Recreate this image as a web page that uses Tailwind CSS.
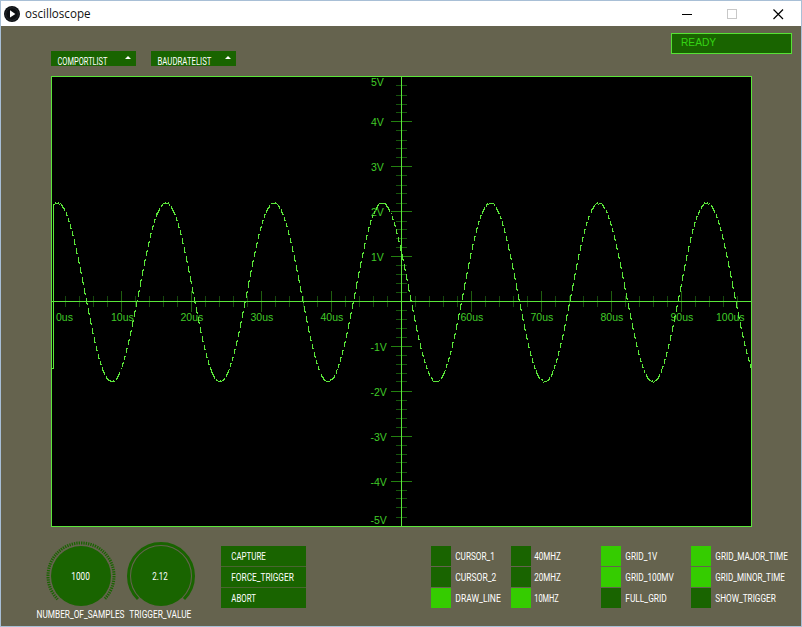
<!DOCTYPE html>
<html lang="en">
<head>
<meta charset="utf-8">
<title>oscilloscope</title>
<script src="https://cdn.jsdelivr.net/npm/@tailwindcss/browser@4"></script>
</head>
<body class="w-[802px] h-[627px] overflow-hidden">
<div class="w-[802px] h-[627px] flex flex-col border border-[#a8bfd6] bg-[#65634e]">
  <header class="h-[25px] shrink-0 bg-white flex items-center">
    <svg class="ml-[3px] shrink-0" width="16" height="16" viewBox="0 0 16 16"><circle cx="8" cy="8" r="8" fill="#0c0f12"/><circle cx="8" cy="8" r="6.3" fill="none" stroke="#30343a" stroke-width=".7"/><path d="M6 4.2 11.4 8 6 11.6Z" fill="#fff"/></svg>
    <svg class="ml-[5px]" width="70" height="24"><text x="0" y="16" textLength="65.5" lengthAdjust="spacingAndGlyphs" class="font-['Open_Sans',sans-serif] text-[12px]" fill="#111">oscilloscope</text></svg>
    <svg class="ml-auto mr-[14px]" width="106" height="24" fill="none" shape-rendering="crispEdges"><path d="M1 12.500h10" stroke="#000"/><rect x="46.500" y="7.500" width="9" height="9" stroke="#c8c8c8"/><path d="M92.500 7.500 102 17M102 7.500 92.500 17" stroke="#000" stroke-width="1.200" shape-rendering="auto"/></svg>
  </header>

  <div class="h-[50px] shrink-0 flex items-start pl-[50px] pr-[9px]">
    <div class="mt-[25px] mr-[15px] w-[85px] h-[15px] bg-[#196400]"><svg width="85" height="15" fill="#fff" class="font-[Roboto,sans-serif] text-[10px] overflow-visible"><text x="6.500" y="14" textLength="50" lengthAdjust="spacingAndGlyphs">COMPORTLIST</text><path d="M74 8 77 5 80 8Z"/></svg></div>
    <div class="mt-[25px] w-[85px] h-[15px] bg-[#196400]"><svg width="85" height="15" fill="#fff" class="font-[Roboto,sans-serif] text-[10px] overflow-visible"><text x="6.500" y="14" textLength="54" lengthAdjust="spacingAndGlyphs">BAUDRATELIST</text><path d="M74 8 77 5 80 8Z"/></svg></div>
    <div class="ml-auto mt-[7px] w-[121px] h-[21px] border border-[#57e234] bg-[#196400] pl-[9px] pt-[2px] font-['Liberation_Sans',sans-serif] text-[10.2px] leading-[14px] text-[#35d414]">READY</div>
  </div>

  <svg class="ml-[50px] shrink-0" width="701" height="451" viewBox="51 76 701 451">
    <rect x="51" y="76" width="701" height="451" fill="#000"/>
    <g id="ticks" shape-rendering="crispEdges"></g>
    <g id="labels" class="font-['Liberation_Sans',sans-serif] text-[10.5px]" fill="#40cc28"></g>
    <g id="wave" fill="#5be63a" shape-rendering="crispEdges"></g>
    <g fill="#5be63a" shape-rendering="crispEdges">
      <rect x="51" y="301" width="701" height="1"/>
      <rect x="401" y="76" width="1" height="451"/>
      <rect x="53" y="204" width="1" height="165"/>
      <rect x="52" y="368" width="2" height="1"/>
      <rect x="51" y="76" width="701" height="1"/>
      <rect x="51" y="526" width="701" height="1"/>
      <rect x="51" y="76" width="1" height="451"/>
      <rect x="751" y="76" width="1" height="451"/>
    </g>
  </svg>

  <div class="flex items-start pl-[35px] pt-[14px] font-[Roboto,sans-serif] text-[10px]">
    <svg class="overflow-visible" width="90" height="82" viewBox="36 541 90 82" fill="#fff">
      <circle cx="81" cy="576" r="30" fill="#196400"/>
      <path d="M57.700 599.300A33 33 0 1 1 104.300 599.300" fill="none" stroke="#196400" stroke-width="3" stroke-dasharray="1.300 1.050"/>
      <text x="71.300" y="580" textLength="18.500" lengthAdjust="spacingAndGlyphs">1000</text>
      <text x="36.500" y="618" textLength="88" lengthAdjust="spacingAndGlyphs">NUMBER_OF_SAMPLES</text>
    </svg>
    <svg class="overflow-visible" width="70" height="82" viewBox="126 541 70 82" fill="#fff">
      <circle cx="161" cy="576" r="30" fill="#196400"/>
      <path d="M138 599A32.500 32.500 0 1 1 184 599" fill="none" stroke="#196400" stroke-width="3"/>
      <text x="152.300" y="580" textLength="15.500" lengthAdjust="spacingAndGlyphs">2.12</text>
      <text x="129.300" y="618" textLength="62" lengthAdjust="spacingAndGlyphs">TRIGGER_VALUE</text>
    </svg>
    <div class="ml-[25px] mt-[5px] w-[85px] flex flex-col gap-px bg-[#4a6530]">
      <div class="h-[20px] bg-[#196400]"><svg width="85" height="20" fill="#fff"><text x="10.300" y="14" textLength="34.500" lengthAdjust="spacingAndGlyphs">CAPTURE</text></svg></div>
      <div class="h-[20px] bg-[#196400]"><svg width="85" height="20" fill="#fff"><text x="10.300" y="14" textLength="62.500" lengthAdjust="spacingAndGlyphs">FORCE_TRIGGER</text></svg></div>
      <div class="h-[20px] bg-[#196400]"><svg width="85" height="20" fill="#fff"><text x="10.300" y="14" textLength="24.500" lengthAdjust="spacingAndGlyphs">ABORT</text></svg></div>
    </div>
    <div id="toggles" class="ml-[125px] mt-[5px] flex"></div>
  </div>
</div>
<script>
// Scale marks along both axes
const vMinor = [85,95,104,112,130,140,148,157,175,185,193,203,221,229,238,247,265,274,283,292,310,319,328,337,355,364,373,381,400,409,418,427,445,454,462,472,490,498,507,517];
let t = '';
vMinor.forEach(y => t += `<rect x="396" y="${y}" width="11" height="1" fill="#16560c"/>`);
[121,166,211,256,346,391,436,481].forEach(y => t += `<rect x="391" y="${y}" width="21" height="1" fill="#23800f"/>`);
for (let i = 1; i < 50; i++) {
  const major = i % 5 === 0;
  t += `<rect x="${51 + i * 14}" y="${major ? 291 : 296}" width="1" height="${major ? 21 : 11}" fill="${major ? '#20600f' : '#16480d'}"/>`;
}
document.getElementById('ticks').innerHTML = t;

const labels = [['5V',371,86],['4V',371,126],['3V',371,171],['2V',371,216],['1V',371,261],['-1V',370.5,351],['-2V',370.5,396],['-3V',370.5,441],['-4V',370.5,486],['-5V',370.5,524],
['0us',56,321],['10us',111,321],['20us',180.5,321],['30us',250.5,321],['40us',320.5,321],['60us',460.5,321],['70us',530.5,321],['80us',600.5,321],['90us',670.5,321],['100us',716,321]];
document.getElementById('labels').innerHTML = labels.map(l => `<text x="${l[1]}" y="${l[2]}">${l[0]}</text>`).join('');

// Sampled sine trace: uneven steps near the crests, short vertical runs with breaks elsewhere
const f = x => 292 - 89.5 * Math.cos(2 * Math.PI * (x - 57.8) / 108.2);
let w = '';
for (let x = 54; x < 751; x++) {
  const ya = f(x), yb = f(x + 1), up = yb < ya;
  const a = Math.round(ya), b = Math.round(yb), slope = Math.abs(yb - ya);
  let top = Math.min(a, b), h = Math.max(1, Math.abs(b - a));
  if (slope < 1) {
    const n = (x * 37) % 11;
    if (n < 2) { top -= 1; h = 2; } else if (n === 5) top += 1;
  } else if (slope < 2.5) {
    if (x % 5 === 0) continue;
    h += 1;
  } else if (x % 2) {
    const g = slope > 3.6 ? 3 : 2;
    h = Math.max(1, h - g);
    if (up) top = Math.max(a, b) - h;
  } else {
    h += 1;
    if (up) top -= 1;
  }
  w += `<rect x="${x}" y="${top}" width="1" height="${h}"/>`;
}
document.getElementById('wave').innerHTML = w;

// Toggle columns: column width, label offset, then [label, text width, on]
const cols = [
  [80, 4.3, [['CURSOR_1',39.5,0],['CURSOR_2',41,0],['DRAW_LINE',45.5,1]]],
  [90, 3.3, [['40MHZ',26.5,0],['20MHZ',26.5,0],['10MHZ',24.5,1]]],
  [90, 4.3, [['GRID_1V',32,1],['GRID_100MV',48.5,1],['FULL_GRID',41.5,0]]],
  [100, 4.3, [['GRID_MAJOR_TIME',72.5,1],['GRID_MINOR_TIME',69.5,1],['SHOW_TRIGGER',60.5,0]]]
];
document.getElementById('toggles').innerHTML = cols.map(c =>
  `<div class="flex flex-col gap-px" style="width:${c[0]}px">` + c[2].map(r =>
    `<div class="flex h-[20px]"><i class="w-[20px] h-[20px] shrink-0 ${r[2] ? 'bg-[#35cc00]' : 'bg-[#196400]'}"></i><svg class="shrink-0 overflow-visible" width="${c[0] - 20}" height="20" fill="#fff"><text x="${c[1]}" y="14" textLength="${r[1]}" lengthAdjust="spacingAndGlyphs">${r[0]}</text></svg></div>`
  ).join('') + '</div>').join('');
</script>
</body>
</html>
